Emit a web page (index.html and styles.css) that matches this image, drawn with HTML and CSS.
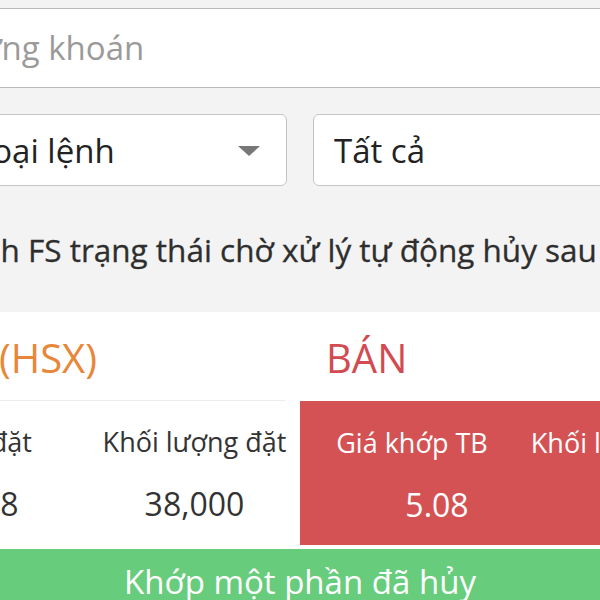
FILE: index.html
```html
<!DOCTYPE html>
<html lang="vi">
<head>
<meta charset="utf-8">
<title>Sổ lệnh</title>
<link rel="stylesheet" href="styles.css">
</head>
<body>
<div class="viewport">
  <div class="app">
    <div class="search">
      <span class="placeholder">Mã chứng khoán</span>
    </div>
    <div class="filters">
      <div class="select">
        <span class="select-text">Loại lệnh</span>
        <span class="caret"></span>
      </div>
      <div class="select">
        <span class="select-text">Tất cả</span>
      </div>
    </div>
    <div class="notice">Lệnh FS trạng thái chờ xử lý tự động hủy sau 15 phút</div>
    <div class="card">
      <div class="card-head">
        <div class="symbol">FLC (HSX)</div>
        <div class="side">BÁN</div>
      </div>
      <div class="grid">
        <div class="cell c1 plain">
          <div class="label">Giá đặt</div>
          <div class="value">5.08</div>
        </div>
        <div class="cell c2 plain">
          <div class="label">Khối lượng đặt</div>
          <div class="value">38,000</div>
        </div>
        <div class="cell c3 sell">
          <div class="label">Giá khớp TB</div>
          <div class="value shifted">5.08</div>
        </div>
        <div class="cell c4 sell">
          <div class="label">Khối lượng khớp</div>
          <div class="value shifted">10,000</div>
        </div>
      </div>
      <div class="status">Khớp một phần đã hủy</div>
    </div>
  </div>
</div>
</body>
</html>
```

FILE: styles.css
```css
html, body {
  margin: 0;
  padding: 0;
}
body {
  background: #f3f3f3;
  font-family: "Open Sans", "Noto Sans", "Liberation Sans", sans-serif;
  color: #333;
  overflow: hidden;
}
.viewport {
  width: 600px;
  height: 600px;
  overflow: hidden;
}
.app {
  width: 900px;
  margin-left: -130px;
  padding-top: 8px;
}
.search {
  height: 78px;
  background: #fff;
  border-top: 1px solid #b9b9b9;
  border-bottom: 1px solid #b9b9b9;
  display: flex;
  align-items: center;
  padding-left: 17px;
}
.placeholder {
  font-size: 33px;
  color: #9a9a9a;
  line-height: 1;
  margin-top: -2px;
}
.filters {
  display: grid;
  grid-template-columns: 333px 333px;
  column-gap: 26px;
  margin-top: 26px;
  padding-left: 84px;
}
.select {
  height: 70px;
  background: #fff;
  border: 1px solid #c4c4c4;
  border-radius: 6px;
  display: flex;
  align-items: center;
  justify-content: space-between;
  padding: 0 26px 0 20px;
}
.select-text {
  font-size: 33px;
  color: #222;
  line-height: 1;
}
.caret {
  width: 0;
  height: 0;
  border-left: 11px solid transparent;
  border-right: 11px solid transparent;
  border-top: 10px solid #777;
  margin-top: 2px;
}
.notice {
  height: 126px;
  display: flex;
  align-items: center;
  white-space: nowrap;
  font-size: 31.5px;
  font-weight: 500;
  color: #2e2e2e;
  padding-left: 77px;
  -webkit-text-stroke: 0.3px #2e2e2e;
}
.card {
  background: #fff;
}
.card-head {
  height: 88px;
  display: flex;
  align-items: center;
  font-size: 40px;
  line-height: 1;
}
.symbol {
  color: #e8873a;
  width: 227px;
  text-align: right;
  margin-top: 4px;
  white-space: nowrap;
}
.side {
  color: #d14b51;
  margin-left: 229px;
  margin-top: 4px;
}
.grid {
  display: flex;
  height: 145px;
}
.cell {
  box-sizing: border-box;
  display: flex;
  flex-direction: column;
  align-items: center;
  white-space: nowrap;
  flex-shrink: 0;
}
.c1 { width: 234px; }
.c2 { width: 181px; margin-right: 15px; }
.c3 { width: 224px; }
.c4 { width: 220px; }
.plain {
  box-shadow: inset 0 1px #ececec;
}
.sell {
  background: #d45254;
  color: #fff;
  margin-top: 1px;
  height: 144px;
}
.label {
  font-size: 27px;
  margin-top: 23px;
  line-height: 38px;
}
.value {
  font-size: 32px;
  margin-top: 23px;
  line-height: 40px;
}
.shifted {
  padding-left: 50px;
}
.plain .label,
.plain .value {
  color: #333;
}
.status {
  margin-top: 4px;
  height: 66px;
  background: #67cc7c;
  color: #fff;
  font-size: 33px;
  line-height: 66px;
  text-align: center;
  margin-left: 130px;
  width: 600px;
}
```
